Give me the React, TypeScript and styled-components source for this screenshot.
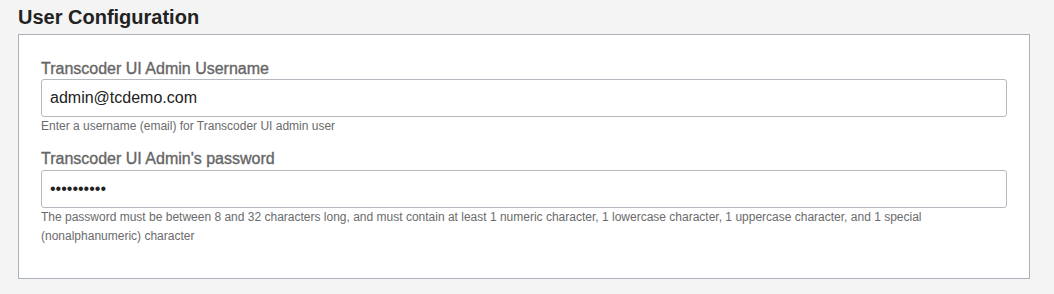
import React from "react";
import styled, { createGlobalStyle } from "styled-components";

const GlobalStyle = createGlobalStyle`
  html, body {
    margin: 0;
    padding: 0;
    background: #f4f4f4;
  }
  body {
    font-family: "Liberation Sans", Arial, Helvetica, sans-serif;
  }
  * { box-sizing: border-box; }
`;

const Page = styled.div`
  width: 1054px;
  height: 294px;
  padding: 6px 24px 0 18px;
  background: #f4f4f4;
`;

const Title = styled.h2`
  margin: 0 0 6px 0;
  font-size: 20px;
  line-height: 22px;
  font-weight: 700;
  color: #222222;
`;

const Panel = styled.section`
  background: #ffffff;
  border: 1px solid #aab1b9;
  padding: 25px 22px 32px 22px;
  display: flex;
  flex-direction: column;
  gap: 14px;
`;

const Field = styled.div`
  display: flex;
  flex-direction: column;
`;

const Label = styled.label<{ $gap: number }>`
  font-family: "Liberation Sans", Arial, sans-serif;
  font-size: 16px;
  line-height: 18px;
  font-weight: 400;
  color: #666666;
  -webkit-text-stroke: 0.35px #666666;
  margin-bottom: ${(p) => p.$gap}px;
`;

const Input = styled.input`
  height: 38px;
  width: 100%;
  border: 1px solid #b4b9bf;
  border-radius: 3px;
  padding: 0 8px;
  font-family: "Liberation Sans", Arial, Helvetica, sans-serif;
  font-size: 16px;
  color: #222222;
  background: #ffffff;
  outline: none;
`;

const Help = styled.div`
  font-size: 12px;
  line-height: 19px;
  color: #6b6b6b;
`;

export default function App() {
  return (
    <>
      <GlobalStyle />
      <Page>
        <Title>User Configuration</Title>
        <Panel>
          <Field>
            <Label $gap={1}>Transcoder UI Admin Username</Label>
            <Input type="text" defaultValue="admin@tcdemo.com" readOnly />
            <Help>Enter a username (email) for Transcoder UI admin user</Help>
          </Field>
          <Field>
            <Label $gap={2}>Transcoder UI Admin's password</Label>
            <Input type="password" defaultValue="1234567890" readOnly />
            <Help>
              The password must be between 8 and 32 characters long, and must contain at least 1 numeric
              character, 1 lowercase character, 1 uppercase character, and 1 special (nonalphanumeric)
              character
            </Help>
          </Field>
        </Panel>
      </Page>
    </>
  );
}
